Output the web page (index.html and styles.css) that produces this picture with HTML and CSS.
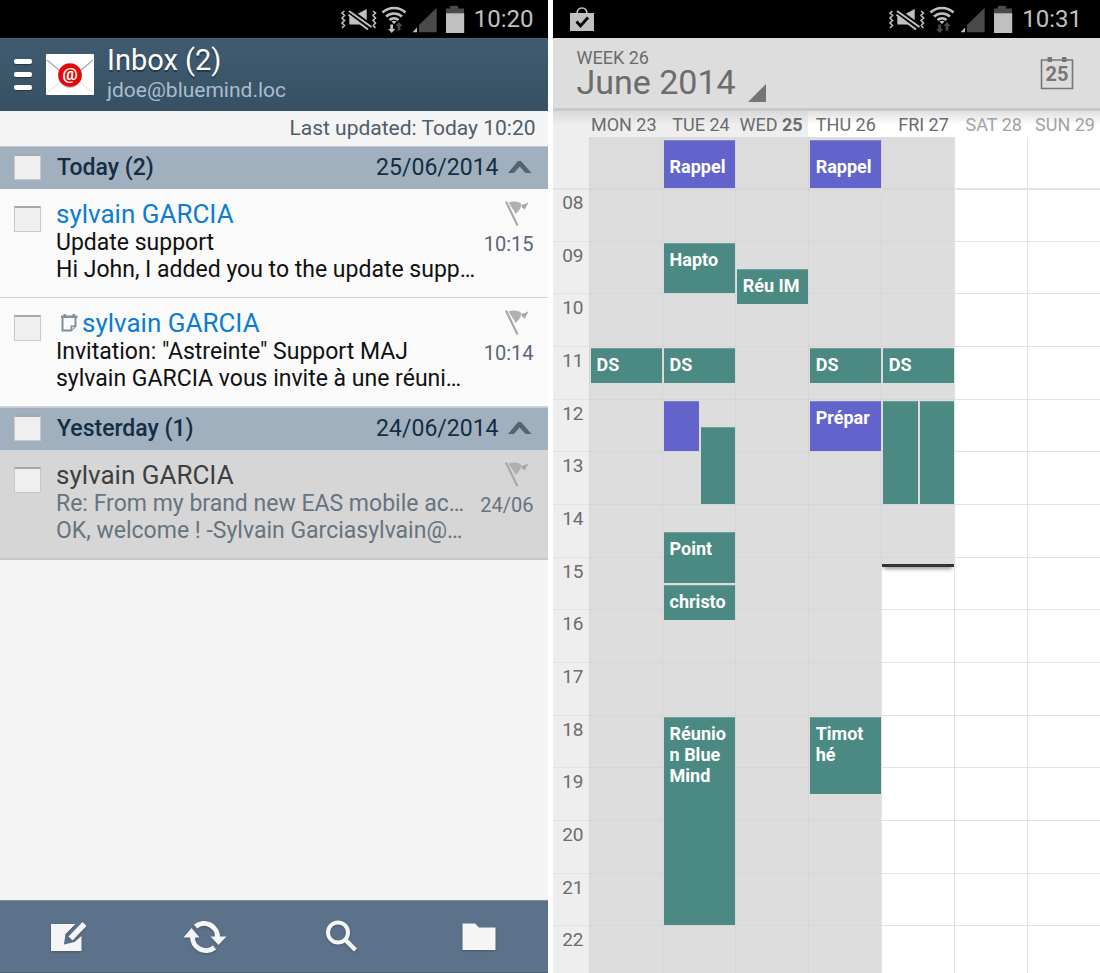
FILE: index.html
```html
<!DOCTYPE html>
<html lang="en">
<head>
<meta charset="utf-8">
<title>Mail and calendar</title>
<link rel="stylesheet" href="styles.css">
</head>
<body>
<svg class="sprites" aria-hidden="true">
  <symbol id="status" viewBox="0 0 126 32">
    <g fill="none" stroke="#c0c0c0" stroke-width="1.600">
      <path d="M4.500 8l-2.500 2 2.500 2.500-2.500 2.500 2.500 2.500-2.500 2.500 2.500 2.500-2.500 2.500M33 8l2.500 2-2.500 2.500 2.500 2.500-2.500 2.500 2.500 2.500-2.500 2.500 2.500 2.500"/>
    </g>
    <path fill="#c0c0c0" d="M9.300 11.500h7L26.700 6v18L22 21.500H9.300z"/>
    <path stroke="#000" stroke-width="7" d="M9 8.500L31 24.500"/>
    <path stroke="#c0c0c0" stroke-width="2" d="M9 8L31.500 24M8.500 11.800L28 26.500"/>
    <g fill="none" stroke="#c0c0c0" stroke-width="2.600">
      <path d="M42.500 9.500A17 17 0 0 1 65.500 9.500M46 13.500A12 12 0 0 1 62 13.500M49.500 17A7 7 0 0 1 58.500 17"/>
    </g>
    <path fill="#c0c0c0" d="M51.500 18.500q2.500-1.500 5 0L54 21z"/>
    <path fill="currentColor" d="M50.300 21.500h2.800v4.500h2.200L51.700 30l-3.600-4h2.200z"/>
    <path fill="#4a4a4a" d="M57.600 27.500h2.800V23h2.200L59 19l-3.600 4h2.200z"/>
    <path fill="#c0c0c0" d="M72.500 29.200h4.500v-4.700z"/>
    <path fill="#4a4a4a" d="M79 29.200V22L96.700 4.700v24.500z"/>
    <path fill="#4a4a4a" d="M106 11V5.500h4V2.700h8v2.800h6V11z"/>
    <path fill="#c0c0c0" d="M106 10.300h18.200V30H106z"/>
  </symbol>
  <symbol id="flag" viewBox="0 0 26 28">
    <path fill="none" stroke="#a8a8a8" stroke-width="2.200" d="M1.500 1.500l12 25"/>
    <path fill="#b0b0b0" d="M4.200 2.500Q8 .8 13 1.800q3.500.8 4.500 2.700l-.8 3.500q-1.200 3-5.200 6.500-1.500-3.500-3.200-5.500z"/>
    <path fill="#a8a8a8" d="M17.500 5q3.500 0 7.500-3l-4 8q-1-1.500-2.800-2z"/>
  </symbol>
</svg>

<main class="screens">
  <section class="phone mail" aria-label="Mail">
    <div class="status-bar">
      <svg class="status-icons"><use href="#status"/></svg>
      <time>10:20</time>
    </div>
    <header class="mail-header">
      <button class="menu" aria-label="Menu"><span></span><span></span><span></span></button>
      <svg class="envelope" viewBox="0 0 48 41" aria-hidden="true">
        <rect width="48" height="41" rx="1" fill="#fff"/>
        <path d="M1 6l19 16M47 6L28 22" stroke="#aaa" stroke-width="1.300"/>
        <path d="M2 38l17-14M46 38L29 24" stroke="#ddd"/>
        <circle cx="24" cy="22" r="12" fill="#999" opacity=".6"/>
        <circle cx="24" cy="21" r="11.800" fill="#e80707"/>
        <text x="24" y="26" text-anchor="middle" class="at">@</text>
      </svg>
      <div>
        <h1>Inbox (2)</h1>
        <p>jdoe@bluemind.loc</p>
      </div>
    </header>
    <p class="updated">Last updated: Today 10:20</p>

    <div class="group">
      <input type="checkbox" aria-label="Select today">
      <h2>Today (2)</h2>
      <time>25/06/2014</time>
      <svg class="chevron" viewBox="0 0 24 14"><path fill="#536573" d="M0 13L10 1h3l10.500 12H17.500L11.700 6.500 6 13z"/></svg>
    </div>
    <article class="message">
      <input type="checkbox" aria-label="Select Update support">
      <div class="text">
        <h3>sylvain GARCIA</h3>
        <p>Update support</p>
        <p>Hi John, I added you to the update supp…</p>
      </div>
      <div class="meta"><svg class="flag"><use href="#flag"/></svg><time>10:15</time></div>
    </article>
    <article class="message">
      <input type="checkbox" aria-label="Select Invitation">
      <div class="text">
        <h3><svg class="invite" viewBox="0 0 18 20"><path fill="none" stroke="#7f909d" stroke-width="2" d="M2.500 4v13.500H11L15.500 13V4"/><path fill="#7f909d" d="M1 2.500h16.500v2.500H1zM3.500 1H6v2H3.500zM12.500 1H15v2h-2.500zM10.500 18.500v-6h6z"/><path fill="#dfe4e8" d="M12 14h2.500L12 16.500z"/></svg>sylvain GARCIA</h3>
        <p>Invitation: "Astreinte" Support MAJ</p>
        <p>sylvain GARCIA vous invite à une réuni…</p>
      </div>
      <div class="meta"><svg class="flag"><use href="#flag"/></svg><time>10:14</time></div>
    </article>
    <div class="group">
      <input type="checkbox" aria-label="Select yesterday">
      <h2>Yesterday (1)</h2>
      <time>24/06/2014</time>
      <svg class="chevron" viewBox="0 0 24 14"><path fill="#536573" d="M0 13L10 1h3l10.500 12H17.500L11.700 6.500 6 13z"/></svg>
    </div>
    <article class="message read">
      <input type="checkbox" aria-label="Select Re: From my brand new EAS mobile">
      <div class="text">
        <h3>sylvain GARCIA</h3>
        <p>Re: From my brand new EAS mobile ac…</p>
        <p>OK, welcome ! -Sylvain Garciasylvain@…</p>
      </div>
      <div class="meta"><svg class="flag"><use href="#flag"/></svg><time>24/06</time></div>
    </article>

    <nav class="actions">
      <button aria-label="Compose"><svg viewBox="0 0 44 36"><path fill="#f5f5f5" d="M5 5h24.500L19.500 15 18 25.500 28.500 23 35.500 17v15H5z"/><path fill="#f5f5f5" d="M22.500 17.500L36.500 3l4 4L26.500 21.500z"/></svg></button>
      <button aria-label="Refresh"><svg viewBox="0 0 44 36"><g fill="none" stroke="#f5f5f5" stroke-width="5"><path d="M12.500 7.500a13.500 13.500 0 0 1 22 11.500"/><path d="M31.500 28.500a13.500 13.500 0 0 1-22-11.500"/></g><path fill="#f5f5f5" d="M27.500 17.500h16L35.500 26zM.500 18.500h16L8.500 9z"/></svg></button>
      <button aria-label="Search"><svg viewBox="0 0 44 36"><circle cx="18" cy="13.500" r="10" fill="none" stroke="#f5f5f5" stroke-width="4"/><path stroke="#f5f5f5" stroke-width="4.500" d="M25 20.500L35.500 31"/></svg></button>
      <button aria-label="Folders"><svg viewBox="0 0 44 36"><path fill="#f5f5f5" d="M5.500 4.500h12.500l4 4H38.500v22.500h-33z"/></svg></button>
    </nav>
  </section>

  <section class="phone calendar" aria-label="Calendar">
    <div class="status-bar idle">
      <svg class="bag" viewBox="0 0 24 24"><path fill="none" stroke="#c0c0c0" stroke-width="1.600" d="M7 7q0-6 5-6t5 6"/><path fill="#c0c0c0" d="M0 6h24v18H0z"/><path fill="none" stroke="#000" stroke-width="2.800" d="M6.500 14.500l4 4.500 7.500-8.500"/></svg>
      <svg class="status-icons"><use href="#status"/></svg>
      <time>10:31</time>
    </div>
    <header class="calendar-header">
      <button class="period"><span><small>WEEK 26</small>June 2014</span><svg viewBox="0 0 18 18"><path fill="#757575" d="M18 0v18H0z"/></svg></button>
      <button class="today" aria-label="Go to today"><svg viewBox="0 0 34 34"><path fill="none" stroke="#777" stroke-width="1.600" d="M1.500 4h31v28.500h-31z"/><path fill="#777" d="M7.500 1h4.500v5H7.500zM22 1h4.500v5H22z"/><text x="17" y="25" text-anchor="middle">25</text></svg></button>
    </header>
    <div class="weekdays">
      <span></span>
      <span>MON 23</span><span>TUE 24</span><span>WED <b>25</b></span>
      <span class="next">THU 26</span><span class="next">FRI 27</span>
      <span class="next rest">SAT 28</span><span class="next rest">SUN 29</span>
    </div>
    <div class="all-day">
      <div class="past"></div>
      <div class="past"><p class="event note">Rappel</p></div>
      <div class="past"></div>
      <div class="past"><p class="event note">Rappel</p></div>
      <div class="past"></div>
      <div></div>
      <div></div>
    </div>
    <div class="scroller">
      <div class="timeline">
        <ol class="hours">
          <li><span>08</span></li><li><span>09</span></li><li><span>10</span></li><li><span>11</span></li><li><span>12</span></li>
          <li><span>13</span></li><li><span>14</span></li><li><span>15</span></li><li><span>16</span></li><li><span>17</span></li>
          <li><span>18</span></li><li><span>19</span></li><li><span>20</span></li><li><span>21</span></li><li><span>22</span></li>
        </ol>
        <div class="days">
          <div class="day past">
            <p class="event" style="grid-row: 61 / 75">DS</p>
          </div>
          <div class="day past">
            <p class="event" style="grid-row: 21 / 41">Hapto</p>
            <p class="event" style="grid-row: 61 / 75">DS</p>
            <p class="event note first" style="grid-row: 81 / 101"></p>
            <p class="event second" style="grid-row: 91 / 121"></p>
            <p class="event" style="grid-row: 131 / 151">Point</p>
            <p class="event" style="grid-row: 151 / 165">christo</p>
            <p class="event" style="grid-row: 201 / 281">Réunio<wbr>n Blue Mind</p>
          </div>
          <div class="day past">
            <p class="event" style="grid-row: 31 / 45">Réu IM</p>
          </div>
          <div class="day past">
            <p class="event" style="grid-row: 61 / 75">DS</p>
            <p class="event note" style="grid-row: 81 / 101">Prépar</p>
            <p class="event" style="grid-row: 201 / 231">Timot<wbr>hé</p>
          </div>
          <div class="day">
            <div class="elapsed" style="grid-row: 1 / 145"></div>
            <p class="event" style="grid-row: 61 / 75">DS</p>
            <p class="event first" style="grid-row: 81 / 121"></p>
            <p class="event second" style="grid-row: 81 / 121"></p>
          </div>
          <div class="day"></div>
          <div class="day"></div>
        </div>
      </div>
    </div>
  </section>
</main>
</body>
</html>
```

FILE: styles.css
```css
* { box-sizing: border-box; margin: 0; padding: 0; }

body { font-family: Roboto, "Noto Sans", sans-serif; background: #fff; }

button { border: 0; background: none; font: inherit; color: inherit; cursor: pointer; }

svg { display: block; flex: none; }

.sprites { display: none; }

.screens { display: grid; grid-template-columns: 1fr 1fr; gap: 5px; height: 100vh; }

.phone { display: flex; flex-direction: column; min-width: 0; min-height: 0; overflow: hidden; }

/* Status bar */
.status-bar {
  flex: none;
  display: flex;
  align-items: center;
  justify-content: flex-end;
  gap: 8px;
  height: 38px;
  padding-right: 14px;
  background: #000;
  color: #c0c0c0;
  font-size: 24px;
}
.status-icons { width: 126px; height: 32px; }
.idle { padding: 0 18px 0 17px; }
.idle .status-icons { color: #4a4a4a; margin-left: auto; }
.bag { width: 24px; height: 24px; }

/* Mail */
.mail { background: #f4f4f4; }
.mail-header {
  display: flex;
  align-items: center;
  height: 73px;
  padding-left: 14px;
  background: linear-gradient(#43617a 0, #405b70 2px, #375063);
  color: #fff;
}
.mail-header div { padding-bottom: 4px; }
.mail-header h1 { font-size: 29px; line-height: 34px; font-weight: 400; text-shadow: 0 2px 1px #22384a; }
.mail-header p { font-size: 21px; line-height: 26px; color: #a9bdce; }
.menu { display: flex; flex-direction: column; gap: 8px; width: 18px; }
.menu span { height: 5px; border-radius: 2px; background: #fff; box-shadow: 0 1px 1px #22384a; }
.envelope { width: 48px; height: 41px; margin: 0 13px 0 14px; }
.at { font: 700 17px Roboto, sans-serif; fill: #fff; }

.updated { padding-right: 12px; text-align: right; font-size: 21px; line-height: 35px; color: #4c5d6d; }

.mail input {
  appearance: none;
  flex: none;
  width: 27px;
  height: 26px;
  border: 1px solid #c8c8c8;
  border-top: 2px solid #a8a8a8;
  background: #efefef;
}

.group {
  display: flex;
  align-items: center;
  height: 43px;
  padding: 0 16px 2px 14px;
  border-top: 1px solid #c2ccd5;
  background: #a0b0bf;
  color: #132e44;
}
.group h2 { flex: 1; margin-left: 16px; font-size: 23px; font-weight: 500; }
.group time { font-size: 23px; }
.chevron { width: 24px; height: 14px; margin-left: 9px; }

.message {
  display: flex;
  height: 109px;
  padding: 11px 14px 0;
  border-bottom: 1px solid #d2d2d2;
  background: #fafafa;
  color: #111;
}
.message input { margin-top: 6px; }
.text { flex: 1; min-width: 0; margin-left: 15px; white-space: nowrap; }
.text h3 { display: flex; align-items: center; font-size: 26px; line-height: 28px; font-weight: 400; color: #0d7dd1; }
.text p { font-size: 23px; line-height: 27px; }
.text h3 + p { padding-top: 1px; }
.invite { width: 18px; height: 20px; margin: 0 4px; }
.meta { display: flex; flex-direction: column; align-items: flex-end; gap: 5px; font-size: 20px; line-height: 24px; color: #566779; }
.flag { width: 26px; height: 27px; margin-right: 4px; }

.read { height: 110px; border-bottom: 2px solid #c8c8c8; background: #d6d6d6; color: #667480; }
.read h3 { color: #3c4043; }
.read .meta { color: #667480; }

.actions {
  display: grid;
  grid-template-columns: repeat(4, 1fr);
  height: 73px;
  margin-top: auto;
  border-top: 1px solid #7d8e9c;
  border-bottom: 1px solid #4c6074;
  background: #5b728a;
}
.actions button { display: flex; align-items: center; justify-content: center; }
.actions svg { width: 44px; height: 36px; filter: drop-shadow(0 1px 1px #43586c); }

/* Calendar */
.calendar { background: #eee; color: #6c6c6c; }
.calendar-header {
  flex: none;
  display: flex;
  justify-content: space-between;
  align-items: center;
  height: 73px;
  padding: 0 26px 0 24px;
  border-bottom: 3px solid #c8c8c8;
  background: #ddd;
}
.period { display: flex; align-items: flex-end; gap: 12px; text-align: left; font-size: 34px; line-height: 30px; }
.period small { display: block; font-size: 18px; line-height: 18px; }
.period svg { width: 18px; height: 18px; margin-bottom: -5px; }
.today svg { width: 34px; height: 34px; }
.today text { font: 700 20px Roboto, sans-serif; fill: #777; }

.weekdays, .all-day { flex: none; display: grid; grid-template-columns: 36px repeat(7, 1fr); }
.weekdays {
  height: 26px;
  border-bottom: 1px solid #d8d8d8;
  font-size: 18px;
  line-height: 27px;
  text-align: right;
  white-space: nowrap;
}
.weekdays span { padding-right: 5px; background: linear-gradient(#d9d9d9, #eee 14px); }
.weekdays .next { background: linear-gradient(#dfdfdf, #fff 14px); }
.weekdays .rest { color: #a2a2a2; }

.all-day { grid-template-columns: repeat(7, 1fr); height: 51px; padding-left: 36px; }
.all-day div { display: flex; padding: 3px 0 0 1px; border-left: 1px solid #e2e2e2; background: #fff; }
.all-day .past { border-color: #d4d4d4; background: #dcdcdc; }
.all-day .event { flex: 1; margin: 0; padding-top: 15px; }

.scroller { flex: 1; min-height: 0; overflow: hidden; }
.timeline { display: grid; height: 790px; }
.hours, .days { grid-area: 1 / 1; min-height: 0; }
.hours {
  display: grid;
  grid-template-rows: repeat(15, 1fr);
  list-style: none;
  background: linear-gradient(90deg, #eee 36px, #fff 36px);
}
.hours li { border-top: 1px solid #e2e2e2; font-size: 19px; line-height: 28px; }
.hours li:first-child { border-top-width: 2px; line-height: 26px; }
.hours span { display: block; width: 31px; text-align: right; }

.days { display: grid; grid-template-columns: repeat(7, 1fr); padding-left: 36px; }
.day {
  display: grid;
  grid-template-columns: 1fr 1fr;
  grid-template-rows: repeat(300, 1fr);
  min-width: 0;
  min-height: 0;
  border-left: 1px solid #e2e2e2;
}
.day.past { background: rgba(212, 212, 212, .8); border-color: #d4d4d4; }
.elapsed {
  grid-column: 1 / -1;
  border-bottom: 3px solid #333;
  background: rgba(212, 212, 212, .8);
  background-clip: padding-box;
  box-shadow: 0 4px 4px -2px #999;
}

.event {
  grid-column: 1 / -1;
  min-width: 0;
  min-height: 0;
  margin: 2px 0 0 1px;
  padding: 5px 0 0 6px;
  overflow: hidden;
  border-top: 1px solid #6f9f99;
  background: #4b8a82;
  color: #fff;
  font-size: 18px;
  font-weight: 700;
  line-height: 21px;
}
.event.first { grid-column: 1; }
.event.second { grid-column: 2; margin-left: 2px; }
.event.note { background: #6264cb; border-color: #8081c4; }
```
